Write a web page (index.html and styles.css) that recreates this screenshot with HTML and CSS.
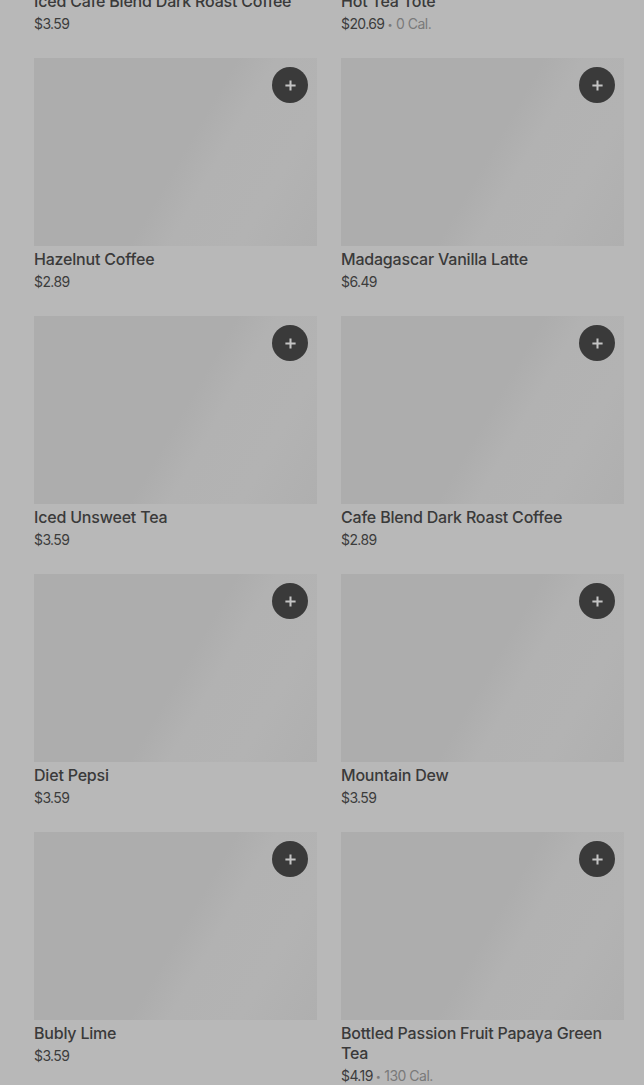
FILE: index.html
```html
<!DOCTYPE html>
<html lang="en">
<head>
  <meta charset="UTF-8">
  <meta name="viewport" content="width=device-width, initial-scale=1.0">
  <title>Menu</title>
  <link rel="stylesheet" href="styles.css">
</head>
<body>
  <div class="grade" id="grade"></div>

  <script>
    const itens = [
      ["Iced Cafe Blend Dark Roast Coffee", "$3.59", ""],
      ["Hot Tea Tote", "$20.69", "0 Cal."],
      ["Hazelnut Coffee", "$2.89", ""],
      ["Madagascar Vanilla Latte", "$6.49", ""],
      ["Iced Unsweet Tea", "$3.59", ""],
      ["Cafe Blend Dark Roast Coffee", "$2.89", ""],
      ["Diet Pepsi", "$3.59", ""],
      ["Mountain Dew", "$3.59", ""],
      ["Bubly Lime", "$3.59", ""],
      ["Bottled Passion Fruit Papaya Green Tea", "$4.19", "130 Cal."]
    ];

    const plus = '<svg width="13" height="13" viewBox="0 0 14 14"><path d="M7 1.5v11M1.5 7h11" stroke="currentColor" stroke-width="2.2"/></svg>';

    document.getElementById("grade").innerHTML = itens.map(([nome, preco, cal]) => `
      <div class="item">
        <div class="foto"><button class="add">${plus}</button></div>
        <div class="nome">${nome}</div>
        <div class="preco">${preco}${cal ? `<span class="ponto">•</span><span class="cal">${cal}</span>` : ""}</div>
      </div>`).join("");
  </script>
</body>
</html>
```

FILE: styles.css
```css
body { margin: 0; background: #b8b8b8; font-family: Inter, Roboto, "Liberation Sans", sans-serif; color: #383838; overflow: hidden; }
.grade {
  display: grid; grid-template-columns: 283px 283px; column-gap: 24px; row-gap: 24px;
  padding: 0 20px 0 34px; margin-top: -200px;
}
.foto {
  position: relative; height: 188px;
  background: linear-gradient(120deg, #adadad 0%, #adadad 52%, #b2b2b2 62%, #b3b3b3 80%, #afafaf 100%);
}
.add {
  position: absolute; top: 9px; right: 9px; width: 36px; height: 36px; border-radius: 50%;
  border: none; padding: 0; background: #3a3a3a; color: #c4c4c4;
  display: flex; align-items: center; justify-content: center;
}
.nome { font-size: 16px; font-weight: 500; line-height: 20px; margin-top: 3px; letter-spacing: -0.2px; color: #3a3a3a; }
.preco { height: 20px; font-size: 14px; line-height: 20px; margin-top: 3px; letter-spacing: -0.6px; color: #3c3c3c; }
.ponto { font-size: 9px; line-height: 0; color: #7a7a7a; margin: 0 4px 0 3px; vertical-align: 1px; }
.cal { color: #7a7a7a; letter-spacing: -0.5px; }
```
